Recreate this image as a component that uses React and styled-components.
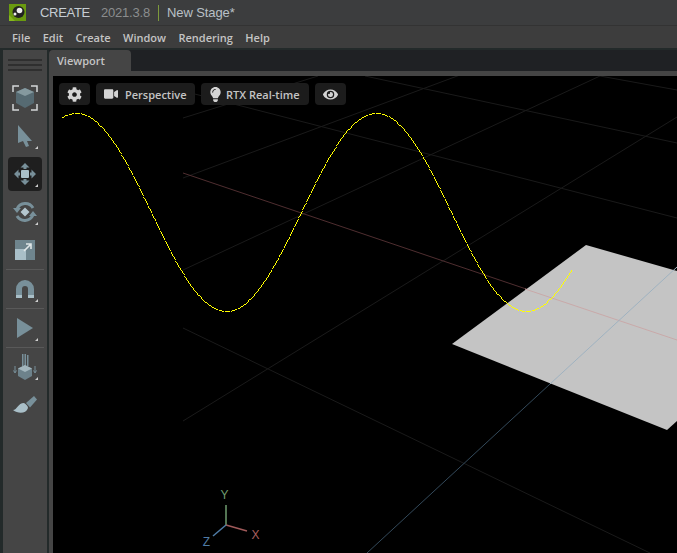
import React from "react";
import styled, { createGlobalStyle } from "styled-components";
import { FaCog, FaVideo, FaLightbulb, FaEye } from "react-icons/fa";

const Global = createGlobalStyle`
  html, body { margin: 0; padding: 0; background: #232a2a; }
  body { font-family: "Liberation Sans", Arial, sans-serif; }
`;

const Shell = styled.div`
  width: 677px;
  height: 553px;
  display: flex;
  flex-direction: column;
  overflow: hidden;
  background: #1f2124;
`;

const TitleBar = styled.header`
  height: 26px;
  box-sizing: border-box;
  flex: none;
  display: flex;
  align-items: center;
  background: #3c3d3e;
  font-size: 13px;
  border-bottom: 1px solid #333;
`;

const Logo = styled.svg`
  width: 17px;
  height: 17px;
  margin-left: 9px;
  margin-right: 14px;
`;

const AppName = styled.span`
  color: #c6cdd3;
  letter-spacing: -0.3px;
`;

const Version = styled.span`
  color: #8b8d8e;
  margin-left: 11px;
  letter-spacing: -0.2px;
`;

const Divider = styled.span`
  width: 1px;
  height: 16px;
  background: #7d9a3c;
  margin: 0 8px 0 8px;
`;

const StageName = styled.span`
  color: #b9c0c6;
  letter-spacing: -0.1px;
`;

const MenuBar = styled.nav`
  height: 22px;
  flex: none;
  display: flex;
  align-items: center;
  gap: 12.4px;
  padding-left: 12px;
  background: #3d3d3d;
  font-family: "Open Sans", sans-serif;
  font-size: 11px;
  font-weight: 600;
  color: #c4c4c4;
`;

const Body = styled.div`
  flex: 1;
  display: flex;
  min-height: 0;
  padding: 2px 0 0 3px;
  background: #232a2a;
`;

const ToolRail = styled.aside`
  width: 44px;
  flex: none;
  display: flex;
  flex-direction: column;
  align-items: center;
  background: #454545;
  padding-top: 9px;
  margin-right: 2px;
`;

const Grip = styled.div`
  width: 34px;
  height: 13px;
  margin-bottom: 9px;
  background: repeating-linear-gradient(to bottom, #2f2f2f 0 2px, #454545 2px 5px);
`;

const ToolButton = styled.button`
  position: relative;
  width: 34px;
  height: 34px;
  flex: none;
  padding: 0;
  border: 0;
  margin-bottom: ${(p) => p.$gap ?? 4}px;
  border-radius: 4px;
  display: flex;
  align-items: center;
  justify-content: center;
  background: ${(p) => (p.$active ? "#1f1f1f" : "transparent")};
`;

const Corner = styled.i`
  position: absolute;
  right: 4px;
  bottom: 4px;
  width: 0;
  height: 0;
  border-left: 3px solid transparent;
  border-bottom: 3px solid #cfcfcf;
`;

const RailRule = styled.hr`
  width: 38px;
  height: 1px;
  flex: none;
  margin: 0 0 2px;
  border: 0;
  background: #595959;
`;

const Workspace = styled.main`
  flex: 1;
  min-width: 0;
  display: flex;
  flex-direction: column;
`;

const TabStrip = styled.div`
  height: 21px;
  flex: none;
  display: flex;
  align-items: flex-end;
  background: #1f2124;
`;

const Tab = styled.div`
  width: 82px;
  height: 21px;
  box-sizing: border-box;
  padding: 3px 0 0 8px;
  background: #454545;
  border-radius: 4px 4px 0 0;
  font-family: "Open Sans", sans-serif;
  font-size: 11px;
  font-weight: 600;
  color: #c4c4c4;
`;

const ViewportFrame = styled.section`
  flex: 1;
  min-height: 0;
  border-top: 5px solid #454545;
  border-left: 4px solid #454545;
  position: relative;
  background: #000;
  overflow: hidden;
`;

const Scene = styled.svg`
  position: absolute;
  left: 0;
  top: 0;
`;

const Overlay = styled.div`
  position: absolute;
  left: 6px;
  top: 7px;
  display: flex;
  gap: 6px;
`;

const Pill = styled.div`
  width: ${(p) => p.$w}px;
  height: 22px;
  box-sizing: border-box;
  padding-left: ${(p) => p.$pad}px;
  display: flex;
  align-items: center;
  gap: ${(p) => p.$gap ?? 0}px;
  border-radius: 4px;
  background: #1c1c1c;
  color: #c4c4c4;
  font-family: "Open Sans", sans-serif;
  font-size: 11px;
  font-weight: 600;
  white-space: nowrap;
`;

const AxisLabel = styled.text`
  font-family: "Liberation Sans", sans-serif;
  font-size: 12px;
  text-anchor: middle;
`;

const gridLines = [
  "M183 118L318 76",
  "M183 178L460 75",
  "M183 270L600 76",
  "M183 421L677 117",
  "M183 91L677 218",
  "M365 76L677 143",
  "M600 76L677 90",
  "M183 328L650 553",
];

const curve = (() => {
  const yAt = (x) => 212 - 99 * Math.cos(((x - 76) / 300) * Math.PI * 2);
  let d = "";
  let walked = 0;
  let lastY = yAt(61);
  for (let x = 61; x <= 572; x += 0.05) {
    const y = yAt(x);
    walked += Math.hypot(0.05, y - lastY);
    lastY = y;
    if (walked >= 1.2) {
      walked = 0;
      d += "M" + Math.round(x) + " " + Math.round(y) + "h1v1h-1z";
    }
  }
  return d;
})();

const ICON = "#78909a";
const ICON_LIGHT = "#a9bfc8";

export default function App() {
  return (
    <Shell>
      <Global />
      <TitleBar>
        <Logo viewBox="0 0 17 17">
          <rect width="17" height="17" fill="#6a9a10" />
          <path d="M0 11L6 17H0z" fill="#86b81c" />
          <circle cx="9.500" cy="8" r="6" fill="#222" />
          <circle cx="10.500" cy="6.500" r="2.800" fill="#eee" />
          <circle cx="6" cy="10" r="1.500" fill="#eee" />
        </Logo>
        <AppName>CREATE</AppName>
        <Version>2021.3.8</Version>
        <Divider />
        <StageName>New Stage*</StageName>
      </TitleBar>
      <MenuBar>
        <span>File</span>
        <span>Edit</span>
        <span>Create</span>
        <span>Window</span>
        <span>Rendering</span>
        <span>Help</span>
      </MenuBar>
      <Body>
        <ToolRail>
          <Grip />
          <ToolButton>
            <svg width="28" height="28" viewBox="0 0 28 28">
              <path d="M2 8V2h6M20 2h6v6M26 20v6h-6M8 26H2v-6" fill="none" stroke="#d3d6d8" strokeWidth="1.500" />
              <path d="M14 4l9 4v11l-9 5-9-5V8z" fill="#566a72" />
              <path d="M14 4l9 4-9 4-9-4z" fill="#85999f" />
            </svg>
          </ToolButton>
          <ToolButton>
            <svg width="16" height="24" viewBox="0 0 16 24">
              <path d="M1 1l14 16h-5l2 5-3 1-3-6-5 2z" fill={ICON} />
            </svg>
            <Corner />
          </ToolButton>
          <ToolButton $active>
            <svg width="24" height="24" viewBox="0 0 24 24">
              <rect x="8" y="8" width="8" height="8" rx="1" fill={ICON_LIGHT} />
              <path d="M12 1l4.500 4.500h-3V7h-3V5.500h-3zM12 23l4.500-4.500h-3V17h-3v1.500h-3zM1 12l4.500-4.500v3H7v3H5.500v3zM23 12l-4.500-4.500v3H17v3h1.500v3z" fill={ICON} />
            </svg>
            <Corner />
          </ToolButton>
          <ToolButton>
            <svg width="24" height="24" viewBox="0 0 24 24">
              <path d="M20 8A9 9 0 0 0 4 9M4 16A9 9 0 0 0 20 15" fill="none" stroke={ICON} strokeWidth="3" />
              <path d="M0 8h8l-4 5zM16 16h8l-4-5z" fill={ICON} />
              <path d="M12 7.500l4.500 4.500-4.500 4.500L7.500 12z" fill="#b4c6ce" />
            </svg>
            <Corner />
          </ToolButton>
          <ToolButton $gap={2}>
            <svg width="20" height="20" viewBox="0 0 20 20">
              <rect width="20" height="20" fill="#6f858e" />
              <rect y="9" width="11" height="11" fill={ICON_LIGHT} />
              <path d="M9 11l7-7M11 4h5v5" stroke="#e0e6e8" strokeWidth="1.600" fill="none" />
            </svg>
          </ToolButton>
          <RailRule />
          <ToolButton $gap={2}>
            <svg width="18" height="18" viewBox="0 0 18 18">
              <path d="M0 18V9a9 9 0 0 1 18 0v9h-6V9a3 3 0 0 0-6 0v9z" fill={ICON} />
              <path d="M0 15h6v3H0zM12 15h6v3h-6z" fill={ICON_LIGHT} />
            </svg>
            <Corner />
          </ToolButton>
          <RailRule />
          <ToolButton $gap={2}>
            <svg width="16" height="20" viewBox="0 0 16 20">
              <path d="M0 0l16 10L0 20z" fill={ICON} />
            </svg>
            <Corner />
          </ToolButton>
          <RailRule />
          <ToolButton>
            <svg width="24" height="26" viewBox="0 0 24 26">
              <path d="M9 0h1.500v12H9zM11.500 0h1.500v12h-1.500zM14 1h1.500v11H14z" fill={ICON} />
              <path d="M12 11l7 3.500v7.500l-7 4-7-4v-7.500z" fill="#6d828b" />
              <path d="M12 11l7 3.500-7 3.500-7-3.500z" fill="#a3b6bd" />
              <path d="M2 12v6M.5 16.500L2 19l1.500-2.500M22 12v6M20.500 16.500L22 19l1.500-2.500" stroke={ICON} fill="none" />
            </svg>
            <Corner />
          </ToolButton>
          <ToolButton>
            <svg width="24" height="18" viewBox="0 0 24 18">
              <path d="M13 7l8-7 3 3.500-7 8z" fill={ICON} />
              <path d="M0 14c4 0 5-7 11-7 2 1 4 3 4 5-2 6-10 6-15 2z" fill={ICON_LIGHT} />
            </svg>
          </ToolButton>
        </ToolRail>
        <Workspace>
          <TabStrip>
            <Tab>Viewport</Tab>
          </TabStrip>
          <ViewportFrame>
            <Scene width="624" height="477" viewBox="53 76 624 477">
              {gridLines.map((d) => (
                <path key={d} d={d} stroke="#1a1a1a" strokeWidth="1" fill="none" />
              ))}
              <path d="M183 173L677 340" stroke="#4f2e30" strokeWidth="1" />
              <path d="M586 245L677 271V421L667 430L452 344z" fill="#c4c4c4" />
              <path d="M525 289L677 340" stroke="#c9a9a9" strokeWidth="1" />
              <path d="M677 267L550 384" stroke="#9fb2c0" strokeWidth="1" />
              <path d="M550 384L367 553" stroke="#33495a" strokeWidth="1" />
              <path d={curve} fill="#ffff00" shapeRendering="crispEdges" />
              <path d="M226 525V505" stroke="#6f9d6f" strokeWidth="1.500" />
              <path d="M226 525L247 531" stroke="#a05a5a" strokeWidth="1.500" />
              <path d="M226 525L213 536" stroke="#4f7ca6" strokeWidth="1.500" />
              <AxisLabel x="224.500" y="499" fill="#6f9d6f">Y</AxisLabel>
              <AxisLabel x="255.500" y="539" fill="#a85e5e">X</AxisLabel>
              <AxisLabel x="206.500" y="546" fill="#4f7ca6">Z</AxisLabel>
            </Scene>
            <Overlay>
              <Pill $w={31} $pad={8}><FaCog size={15} color="#d4d4d4" /></Pill>
              <Pill $w={99} $pad={8} $gap={7}>
                <FaVideo size={14} color="#d4d4d4" />
                Perspective
              </Pill>
              <Pill $w={108} $pad={7} $gap={3}>
                <FaLightbulb size={15} color="#d4d4d4" />
                RTX Real-time
              </Pill>
              <Pill $w={31} $pad={8}><FaEye size={15} color="#d4d4d4" /></Pill>
            </Overlay>
          </ViewportFrame>
        </Workspace>
      </Body>
    </Shell>
  );
}
